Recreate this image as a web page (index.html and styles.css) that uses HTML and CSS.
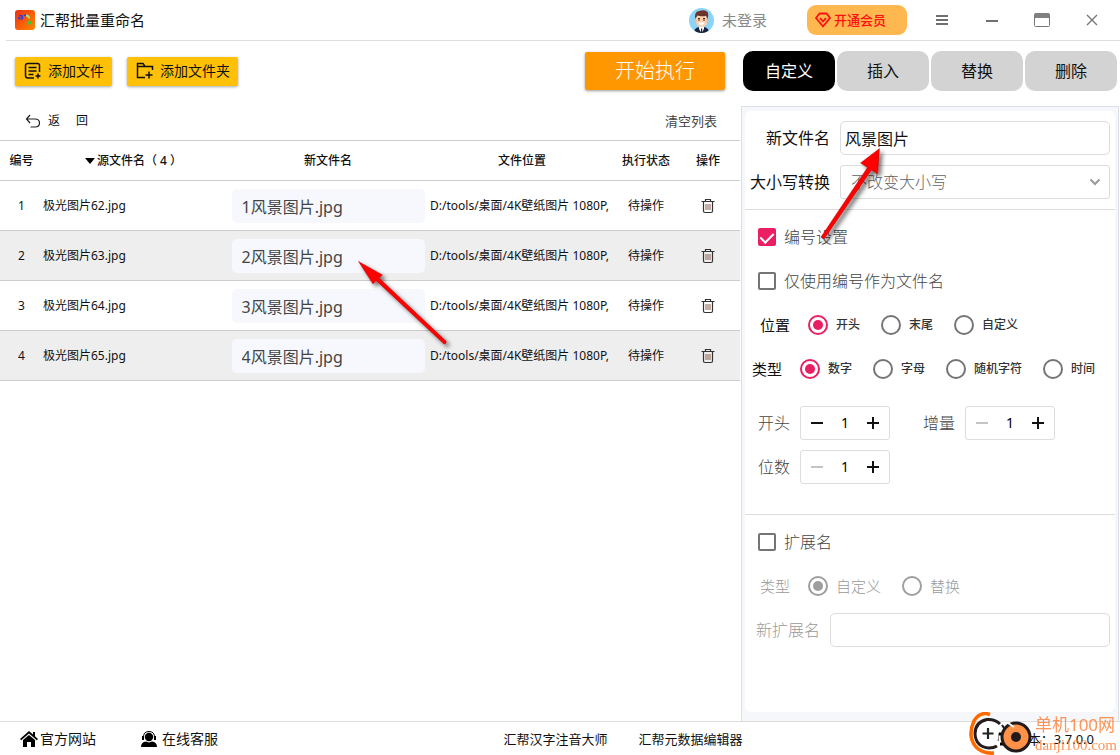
FILE: index.html
```html
<!DOCTYPE html>
<html lang="zh-CN">
<head>
<meta charset="utf-8">
<meta name="viewport" content="width=device-width, initial-scale=1">
<title>汇帮批量重命名</title>
<link rel="stylesheet" href="styles.css">
</head>
<body>
<svg class="defs" aria-hidden="true">
  <symbol id="trash" viewBox="0 0 16 16"><path d="M1.500 3.500h13M5.500 3.500V1.500h5v2M3.500 3.500v9.500q0 1.500 1.500 1.500h6q1.500 0 1.500-1.500V3.500" fill="none" stroke="#333" stroke-width="1.200"/><path d="M6 6v6M8 6v6M10 6v6" stroke="#8a5f4c"/></symbol>
</svg>

<header class="titlebar">
  <svg class="logo" width="20" height="20" viewBox="0 0 20 20" aria-hidden="true">
    <defs><linearGradient id="lg" x1="0" y1="0" x2="1" y2="1"><stop offset="0" stop-color="#ee2d12"/><stop offset="1" stop-color="#ff8a00"/></linearGradient></defs>
    <rect width="20" height="20" rx="3" fill="url(#lg)"/>
    <path d="M4 5.500h2.500q1 0 1 1v3M7.500 7H5q-1.500 0-1.500 1T5 9h2.500" fill="none" stroke="#2a3be0" stroke-width="1.200"/>
    <path d="M9 5l2 .5" stroke="#2a3be0" stroke-width="1.500"/><path d="M11 5.500q3 0 3 3" fill="none" stroke="#a6e86a" stroke-width="2"/>
    <path d="M12 15.500l2.500-5 2.500 5M13 13.500h3" fill="none" stroke="#3fc53a" stroke-width="1.300"/>
  </svg>
  <h1 class="app-name">汇帮批量重命名</h1>
  <button class="account" type="button">
    <svg width="25" height="25" viewBox="0 0 25 25" aria-hidden="true">
      <defs><clipPath id="av"><circle cx="12.500" cy="12.500" r="12.500"/></clipPath></defs>
      <g clip-path="url(#av)">
        <rect width="25" height="25" fill="#8ad4fa"/>
        <path d="M5 25q0-5 5-6h5q5 1 5 6z" fill="#18243f"/>
        <path d="M10 18h5v3l-2.500 4-2.500-4z" fill="#fff"/>
        <path d="M12 20.500h1.200V25H12z" fill="#18243f"/>
        <path d="M7 8q0-2 5.500-2T18 8v5q0 6-5.500 6T7 13z" fill="#fdd0ae"/>
        <circle cx="6.800" cy="12.500" r="1.300" fill="#f5b995"/><circle cx="18.200" cy="12.500" r="1.300" fill="#f5b995"/>
        <path d="M6.300 11Q5 3.500 10 3q7-2 9 2 .800 3-.600 6L17 7.800q-5 1.200-8.500-.300z" fill="#6b352b"/>
        <path d="M9 10.500h2M14 10.500h2" stroke="#4b2a22"/><circle cx="10" cy="12" r=".8" fill="#222"/><circle cx="15" cy="12" r=".8" fill="#222"/>
        <path d="M9.500 14.500h6q-.5 2.500-3 2.500t-3-2.500z" fill="#fff"/>
      </g>
    </svg>
    <span>未登录</span>
  </button>
  <button class="vip" type="button">
    <svg width="16" height="16" viewBox="0 0 16 16" fill="none" stroke="#f11" stroke-width="1.900" stroke-linejoin="round" aria-hidden="true"><path d="M4.500 1.500h7l3.500 4.500-7 8.500L1 6z"/><path d="M5 6l3 3.500L11 6"/></svg>
    <span>开通会员</span>
  </button>
  <div class="window-buttons">
    <button type="button" aria-label="菜单"><svg width="16" height="16" viewBox="0 0 16 16"><path d="M2 4h12M2 8h12M2 12h12" stroke="#707070" stroke-width="1.800"/></svg></button>
    <button type="button" aria-label="最小化"><svg width="16" height="16" viewBox="0 0 16 16"><path d="M2 9h12" stroke="#707070" stroke-width="2"/></svg></button>
    <button type="button" aria-label="最大化"><svg width="16" height="16" viewBox="0 0 16 16"><rect x=".5" y="1.500" width="15" height="13" rx="1" fill="#fff" stroke="#777"/><path d="M1 1h14v5H1z" fill="#808080"/></svg></button>
    <button type="button" aria-label="关闭"><svg width="16" height="16" viewBox="0 0 16 16"><path d="M3 3l10 10M13 3L3 13" stroke="#777" stroke-width="1.400"/></svg></button>
  </div>
</header>

<main class="workspace">
  <section class="files">
    <div class="toolbar">
      <button class="add" type="button">
        <svg width="18" height="18" viewBox="0 0 18 18" fill="none" stroke="#111" stroke-width="1.500" aria-hidden="true"><path d="M10 16H4q-2.500 0-2.500-2.500v-10Q1.500 1.500 4 1.500h9.500q2 0 2 2V10M4.500 5.500h8M4.500 9h8M4.500 12.500h5M14 11.500v5M11.500 14h5"/></svg>
        <span>添加文件</span>
      </button>
      <button class="add" type="button">
        <svg width="18" height="18" viewBox="0 0 18 18" fill="none" stroke="#111" stroke-width="1.500" aria-hidden="true"><path d="M9 15.500H1.500v-14H7l2 3h7.500V8M1.500 4.500H9M13 9.500v7M9.500 13h7"/></svg>
        <span>添加文件夹</span>
      </button>
      <button class="run" type="button">开始执行</button>
    </div>
    <div class="list-actions">
      <button class="back" type="button">
        <svg width="16" height="14" viewBox="0 0 16 14" fill="none" stroke="#222" stroke-width="1.200" aria-hidden="true"><path d="M5 1L1.500 5 5 9M1.500 5H10q4.500 0 4.500 4T10 13H5.500"/></svg>
        <span>返</span><span>回</span>
      </button>
      <button class="clear" type="button">清空列表</button>
    </div>
    <table class="file-table">
      <colgroup><col class="c-no"><col class="c-src"><col class="c-new"><col><col class="c-state"><col class="c-op"></colgroup>
      <thead>
        <tr><th>编号</th><th class="src-head"><span class="sort"></span>源文件名（ 4 ）</th><th>新文件名</th><th>文件位置</th><th>执行状态</th><th>操作</th></tr>
      </thead>
      <tbody>
        <tr><td class="no">1</td><td class="src">极光图片62.jpg</td><td><input class="new-name" aria-label="新文件名 1" value="1风景图片.jpg"></td><td class="path"><div>D:/tools/桌面/4K壁纸图片 1080P,</div></td><td class="state">待操作</td><td class="op"><button type="button" aria-label="删除"><svg width="16" height="16"><use href="#trash"/></svg></button></td></tr>
        <tr><td class="no">2</td><td class="src">极光图片63.jpg</td><td><input class="new-name" aria-label="新文件名 2" value="2风景图片.jpg"></td><td class="path"><div>D:/tools/桌面/4K壁纸图片 1080P,</div></td><td class="state">待操作</td><td class="op"><button type="button" aria-label="删除"><svg width="16" height="16"><use href="#trash"/></svg></button></td></tr>
        <tr><td class="no">3</td><td class="src">极光图片64.jpg</td><td><input class="new-name" aria-label="新文件名 3" value="3风景图片.jpg"></td><td class="path"><div>D:/tools/桌面/4K壁纸图片 1080P,</div></td><td class="state">待操作</td><td class="op"><button type="button" aria-label="删除"><svg width="16" height="16"><use href="#trash"/></svg></button></td></tr>
        <tr><td class="no">4</td><td class="src">极光图片65.jpg</td><td><input class="new-name" aria-label="新文件名 4" value="4风景图片.jpg"></td><td class="path"><div>D:/tools/桌面/4K壁纸图片 1080P,</div></td><td class="state">待操作</td><td class="op"><button type="button" aria-label="删除"><svg width="16" height="16"><use href="#trash"/></svg></button></td></tr>
      </tbody>
    </table>
  </section>

  <aside class="settings">
    <nav class="tabs">
      <button class="tab active" type="button">自定义</button>
      <button class="tab" type="button">插入</button>
      <button class="tab" type="button">替换</button>
      <button class="tab" type="button">删除</button>
    </nav>
    <div class="panel">
      <form class="card">
        <div class="group naming">
          <div class="field"><label class="field-label" for="new-name">新文件名</label><input class="box" id="new-name" value="风景图片"></div>
          <div class="field"><label class="field-label" for="case">大小写转换</label>
            <div class="select-wrap"><select class="box" id="case"><option>不改变大小写</option></select>
              <svg class="chevron" width="12" height="8" viewBox="0 0 12 8" aria-hidden="true"><path d="M1.500 1.500L6 6l4.500-4.500" fill="none" stroke="#999" stroke-width="2"/></svg></div>
          </div>
        </div>
        <div class="group numbering">
          <label class="check"><input type="checkbox" checked>编号设置</label>
          <label class="check"><input type="checkbox">仅使用编号作为文件名</label>
          <div class="radios indent" role="radiogroup" aria-label="位置">
            <span class="radio-title">位置</span>
            <label><input type="radio" name="pos" checked>开头</label>
            <label><input type="radio" name="pos">末尾</label>
            <label><input type="radio" name="pos">自定义</label>
          </div>
          <div class="radios" role="radiogroup" aria-label="类型">
            <span class="radio-title">类型</span>
            <label><input type="radio" name="kind" checked>数字</label>
            <label><input type="radio" name="kind">字母</label>
            <label><input type="radio" name="kind">随机字符</label>
            <label><input type="radio" name="kind">时间</label>
          </div>
          <div class="steppers">
            <label for="start">开头</label>
            <div class="stepper"><button type="button" class="minus" aria-label="减少"></button><input id="start" value="1"><button type="button" class="plus" aria-label="增加"></button></div>
            <label class="second" for="step">增量</label>
            <div class="stepper"><button type="button" class="minus" disabled aria-label="减少"></button><input id="step" value="1"><button type="button" class="plus" aria-label="增加"></button></div>
            <label for="digits">位数</label>
            <div class="stepper"><button type="button" class="minus" disabled aria-label="减少"></button><input id="digits" value="1"><button type="button" class="plus" aria-label="增加"></button></div>
          </div>
        </div>
        <div class="group extension">
          <label class="check"><input type="checkbox">扩展名</label>
          <div class="radios indent muted" role="radiogroup" aria-label="扩展名类型">
            <span class="radio-title">类型</span>
            <label><input type="radio" name="ext" checked disabled>自定义</label>
            <label><input type="radio" name="ext" disabled>替换</label>
          </div>
          <div class="field muted"><label class="ext-label" for="ext-name">新扩展名</label><input class="box" id="ext-name" disabled></div>
        </div>
      </form>
    </div>
  </aside>
</main>

<footer class="footer">
  <div class="foot-left">
    <a href="#"><svg width="18" height="18" viewBox="0 0 18 18" aria-hidden="true"><path d="M9 1L0 9l1.200 1.200L9 3.500l7.800 6.700L18 9l-3-2.700V2h-2v2.500z"/><path d="M9 5L3 10v7h4v-5h4v5h4v-7z"/></svg>官方网站</a>
    <a class="service" href="#"><svg width="16" height="18" viewBox="0 0 16 18" aria-hidden="true"><circle cx="8" cy="7" r="4.200"/><path d="M2.500 8q-.5-6.500 5.500-6.500T13.500 8" fill="none" stroke="#000"/><path d="M1 6h2v4H1zM13 6h2v4h-2zM0 17q0-5 5-5.500l3 1 3-1q5 .5 5 5.500z"/></svg>在线客服</a>
  </div>
  <div class="foot-mid"><a href="#">汇帮汉字注音大师</a><a href="#">汇帮元数据编辑器</a></div>
  <div class="foot-right"><svg width="16" height="16" viewBox="0 0 16 16" fill="none" stroke="#000" stroke-width="3" aria-hidden="true"><path d="M2 10V3h7M14 6v7H5"/></svg><span>版本：3.7.0.0</span></div>
</footer>

<svg class="arrows" width="1120" height="755" viewBox="0 0 1120 755" aria-hidden="true">
  <defs><filter id="sh" x="-20%" y="-20%" width="150%" height="150%"><feDropShadow dx="3" dy="3" stdDeviation="2" flood-color="#000" flood-opacity=".55"/></filter></defs>
  <g fill="#f00" stroke="#a01010" stroke-width=".4" filter="url(#sh)">
    <path d="M358.500 261.500L382.500 275 379 278 446 341Q447 343.500 444 344L376 280.500 373 284z"/>
    <path d="M879.500 148.500L877.500 174 871.500 170 824.500 238.500Q822 239.500 821 237L867.500 167.500 860.500 163z"/>
  </g>
</svg>

<div class="watermark">
  <svg width="66" height="44" viewBox="0 0 66 44" aria-hidden="true">
    <path d="M21 2.500Q11-1 5 9-2 24 7 35q7 7 18 6" fill="none" stroke="#ff6a00" stroke-width="3.500"/>
    <path d="M31 12Q26 7 18 7.500 6 10 6 22q1 13 14 14 5 0 8-2" fill="#fff" stroke="#261c1c" stroke-width="3"/>
    <path d="M19 16v11M13.500 21.500h11M33 13l4 6" stroke="#222" stroke-width="2.200"/>
    <circle cx="47" cy="25" r="14" fill="#ff9148" stroke="#221b1b" stroke-width="3"/>
    <path d="M39 11l6 4" stroke="#fff" stroke-width="2"/><circle cx="47" cy="25" r="5" fill="#221b1b"/>
  </svg>
  <div class="mark-text"><span class="mark-name">单机100网</span><span class="mark-site">danji100.com</span></div>
</div>
</body>
</html>
```
FILE: styles.css
```css
* { box-sizing: border-box; }
body {
  margin: 0;
  min-height: 100vh;
  display: flex;
  flex-direction: column;
  position: relative;
  overflow-x: hidden;
  background: #fff;
  color: #111;
  font: 12px/18px "Noto Sans", "Noto Sans CJK SC", sans-serif;
}
button, input, select { font: inherit; color: inherit; }
button { border: 0; padding: 0; background: none; display: flex; align-items: center; justify-content: center; cursor: pointer; }
a { color: inherit; text-decoration: none; }
svg { flex: none; }
.defs { position: absolute; width: 0; height: 0; }

.titlebar { display: flex; align-items: center; height: 41px; margin-left: 6px; padding: 0 3px 0 9px; border-bottom: 1px solid #ddd; }
.app-name { margin: 0 auto 0 5px; font-size: 15px; font-weight: 400; }
.account { gap: 8px; font-size: 15px; color: #888; }
.vip { justify-content: flex-start; width: 100px; height: 30px; margin: 0 10px 0 40px; padding-left: 8px; gap: 3px; border-radius: 9px; background: #ffb850; color: #f11; font-size: 13px; font-weight: 500; }
.window-buttons { display: flex; }
.window-buttons button { width: 50px; height: 32px; }

.workspace { flex: 1; display: grid; grid-template-columns: minmax(0, 1fr) 380px; }
.toolbar { display: flex; align-items: center; gap: 15px; height: 60px; padding: 0 15px; }
.add { height: 29px; gap: 6px; padding: 0 8px 0 9px; border-radius: 2px; background: #ffc107; font-size: 14px; box-shadow: 0 1px 3px rgba(0, 0, 0, .35); }
.run { width: 140px; height: 38px; margin-left: auto; border-radius: 2px; background: #ff9800; color: #fff; font-size: 20px; font-weight: 300; box-shadow: 0 1px 3px rgba(0, 0, 0, .4); }
.list-actions { display: flex; align-items: center; justify-content: space-between; height: 39px; padding: 0 23px 0 25px; }
.back span { margin-left: 7px; }
.back span + span { margin-left: 16px; }
.clear { font-size: 13px; color: #444; }

.file-table { width: 100%; table-layout: fixed; border-collapse: separate; border-spacing: 0; border-top: 1px solid #ccc; }
.c-no { width: 43px; }
.c-src { width: 185px; }
.c-new { width: 200px; }
.c-state { width: 60px; }
.c-op { width: 64px; }
.file-table th, .file-table td { height: 50px; padding: 0; border-bottom: 1px solid #ccc; font-weight: 400; }
.file-table th { height: 40px; font-weight: 500; }
.file-table tbody tr:nth-child(even) { background: #eee; }
.file-table .src-head { padding-right: 4px; white-space: nowrap; }
.sort { display: inline-block; margin-right: 2px; border: 5px solid transparent; border-top: 6px solid #000; border-bottom: 0; vertical-align: 1px; }
.no, .state, .op { text-align: center; }
.file-table .path { padding: 0 3px 0 2px; }
.path div { overflow: hidden; white-space: nowrap; }
.op button { margin: 0 auto; }
.new-name { display: block; width: 193px; height: 34px; margin: 0 auto; padding: 0 10px; border: 0; border-radius: 5px; background: #f6f8fd; color: #444; font-size: 16px; }

.settings { display: flex; flex-direction: column; }
.tabs { display: grid; grid-template-columns: repeat(4, 1fr); gap: 2px; padding: 10px 3px 15px; }
.tab { height: 40px; border-radius: 10px; background: #d3d3d3; font-size: 16px; }
.tab.active { background: #000; color: #fff; }
.panel { flex: 1; display: flex; margin: 0 1px; padding: 4px 3px 9px; border: 1px solid #dcdfe6; border-bottom: 0; background: #f5f7fa; }
.card { flex: 1; min-width: 0; border-radius: 6px; background: #fff; }
.group { border-bottom: 1px solid #ddd; }
.naming { padding: 10px 5px; display: grid; gap: 10px; }
.field { display: flex; align-items: center; gap: 10px; }
.field-label { width: 80px; text-align: right; font-size: 16px; white-space: nowrap; }
.box { flex: 1; min-width: 0; width: 100%; height: 34px; padding: 0 4px; border: 1px solid #dcdcdc; border-radius: 5px; background: #fff; font-size: 16px; }
.select-wrap { flex: 1; position: relative; }
select.box { display: block; appearance: none; padding: 0 30px 0 10px; border-radius: 3px; color: #606266; font-weight: 300; }
.chevron { position: absolute; right: 9px; top: 13px; pointer-events: none; }

.numbering { padding: 5px 5px 30px; }
.check, .radios { display: flex; align-items: center; height: 44px; }
.check { gap: 8px; padding-left: 8px; font-size: 16px; font-weight: 300; color: #444; }
.check input { appearance: none; width: 18px; height: 18px; margin: 0; border: 2px solid #757575; border-radius: 2px; display: grid; justify-items: center; }
.check input:checked { border-color: #e91e63; background: #e91e63; }
.check input:checked::after { content: ""; width: 6px; height: 11px; border: solid #fff; border-width: 0 2px 2px 0; transform: rotate(45deg); }
.radios { padding-left: 2px; color: #333; font-weight: 500; }
.radios.indent { padding-left: 10px; }
.radio-title { flex: none; width: 48px; color: #111; font-size: 15px; font-weight: 400; }
.radios label { display: flex; align-items: center; gap: 8px; margin-right: 21px; white-space: nowrap; }
.radios label:last-child { margin-right: 0; }
.radios input { appearance: none; width: 20px; height: 20px; margin: 0; border: 2px solid #757575; border-radius: 50%; display: grid; place-items: center; }
.radios input:checked { border-color: #e91e63; }
.radios input:checked::after { content: ""; width: 10px; height: 10px; border-radius: 50%; background: #e91e63; }

.steppers { display: grid; grid-template-columns: 42px 90px 75px 90px; row-gap: 10px; align-items: center; padding: 15px 0 0 8px; font-size: 16px; font-weight: 300; color: #444; }
.steppers .second { padding-left: 33px; }
.stepper { display: flex; align-items: center; height: 34px; padding: 0 6px; border: 1px solid #ddd; border-radius: 3px; }
.stepper input { flex: 1; min-width: 0; padding: 0; border: 0; text-align: center; color: #000; font-size: 14px; font-weight: 400; background: none; }
.stepper button { flex: none; width: 20px; height: 24px; display: grid; }
.minus::before, .plus::before, .plus::after { content: ""; grid-area: 1 / 1; place-self: center; width: 12px; height: 2px; background: #111; }
.plus::after { width: 2px; height: 12px; }
.minus:disabled::before { background: #c4c4c4; }

.extension { padding: 5px 5px 30px; border: 0; }
.muted, .muted .radio-title { color: #999; font-size: 15px; font-weight: 300; }
.muted input[type="radio"] { border-color: #9e9e9e; }
.muted input[type="radio"]:checked::after { background: #9e9e9e; }
.field.muted { padding: 5px 0 0 6px; }
.ext-label { font-size: 16px; }

.footer { display: grid; grid-template-columns: 4fr auto 3fr; align-items: center; height: 34px; border-top: 1px solid #ddd; font-size: 13px; }
.footer a, .footer div { display: flex; align-items: center; }
.foot-left { gap: 45px; padding-left: 20px; font-size: 14px; }
.foot-left a { gap: 2px; }
.foot-left .service { gap: 5px; }
.foot-mid { gap: 31px; }
.foot-right { justify-content: flex-end; gap: 4px; padding-right: 26px; }

.arrows { position: absolute; top: 0; left: 0; pointer-events: none; }
.watermark { position: absolute; right: 3px; bottom: -1px; display: flex; align-items: center; pointer-events: none; color: #ff7a2e; }
.mark-text { display: flex; flex-direction: column; opacity: .8; }
.mark-name { font-size: 17px; line-height: 22px; white-space: nowrap; }
.mark-site { font: 15px/18px "Liberation Serif", serif; }
```
